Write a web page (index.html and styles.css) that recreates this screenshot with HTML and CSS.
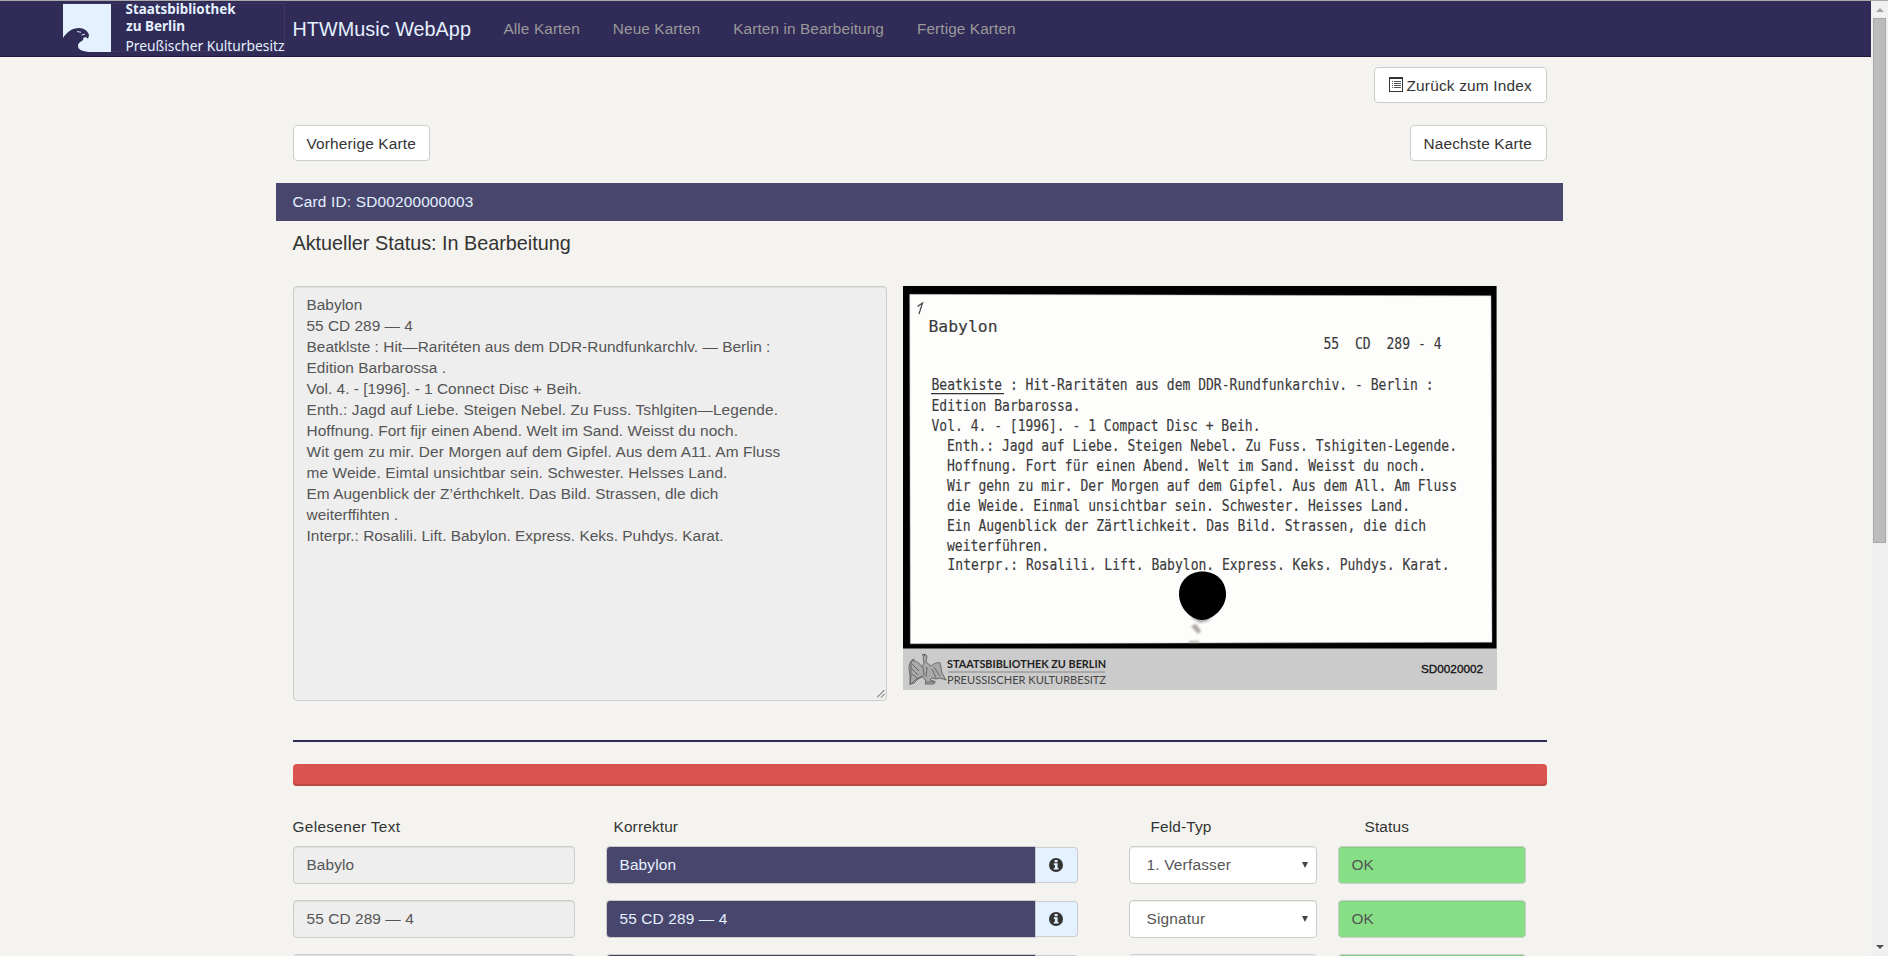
FILE: index.html
```html
<!DOCTYPE html>
<html lang="de">
<head>
<meta charset="utf-8">
<title>HTWMusic WebApp</title>
<link rel="stylesheet" href="styles.css">
</head>
<body>
<div class="page">
  <header class="navbar">
    <svg class="logo" width="222" height="49" viewBox="0 0 222 49">
      <rect x=".5" y=".5" width="221" height="48" fill="none" stroke="#3d3762"/>
      <rect x="0" y="1" width="48" height="48" fill="#e4f1ff"/>
      <path d="M0 35C4 29 9 25 16 25c5 0 9 3 10 7l-1 4c-1-2-3-2-5-1 1 1 0 2-1 3-3 1-4 3-4 5 0 4 5 5 10 6H0z" fill="#312b57"/>
      <path d="M14 28.500l4 .8M18.500 32l3.500-.8" stroke="#e4f1ff" stroke-width=".9" fill="none"/>
      <text class="logo-bold" x="62.500" y="11" textLength="110" lengthAdjust="spacingAndGlyphs">Staatsbibliothek</text>
      <text class="logo-bold" x="63" y="28" textLength="59" lengthAdjust="spacingAndGlyphs">zu Berlin</text>
      <text class="logo-thin" x="62.500" y="47.500" textLength="159" lengthAdjust="spacingAndGlyphs">Preußischer Kulturbesitz</text>
    </svg>
    <a class="brand">HTWMusic WebApp</a>
    <nav class="links"><a>Alle Karten</a><a>Neue Karten</a><a>Karten in Bearbeitung</a><a>Fertige Karten</a></nav>
  </header>
  <main class="container">
    <div class="toolbar end">
      <a class="btn btn-index"><svg width="14" height="15" viewBox="0 0 14 15" shape-rendering="crispEdges"><path d="M.5.5h13v14H.5z" fill="#fff" stroke="#333"/><path d="M0 0h14v2H0z" fill="#333"/><path d="M3 4.500h1M3 6.500h1M3 8.500h1M3 10.500h1M5 4.500h7M5 6.500h7M5 8.500h7M5 10.500h7" stroke="#555"/></svg>Zurück zum Index</a>
    </div>
    <div class="toolbar between"><a class="btn btn-prev">Vorherige Karte</a><a class="btn btn-next">Naechste Karte</a></div>
    <div class="card-bar">Card ID: SD00200000003</div>
    <h4 class="status-title">Aktueller Status: In Bearbeitung</h4>
    <section class="compare">
      <div class="ocr"><div>Babylon</div><div>55 CD 289 — 4</div><div class="w1">Beatklste : Hit—Raritéten aus dem DDR-Rundfunkarchlv. — Berlin :</div><div class="w1">Edition Barbarossa .</div><div>Vol. 4. - [1996]. - 1 Connect Disc + Beih.</div><div class="w3">Enth.: Jagd auf Liebe. Steigen Nebel. Zu Fuss. Tshlgiten—Legende.</div><div class="w2">Hoffnung. Fort fijr einen Abend. Welt im Sand. Weisst du noch.</div><div class="w3">Wit gem zu mir. Der Morgen auf dem Gipfel. Aus dem A11. Am Fluss</div><div class="w3">me Weide. Eimtal unsichtbar sein. Schwester. Helsses Land.</div><div class="w1">Em Augenblick der Z’érthchkelt. Das Bild. Strassen, dle dich</div><div>weiterffihten .</div><div>Interpr.: Rosalili. Lift. Babylon. Express. Keks. Puhdys. Karat.</div><svg class="grip" width="8" height="8" viewBox="0 0 8 8"><path d="M0 7.500L7.500 0M4 7.500L7.500 4" stroke="#555" fill="none"/></svg></div>
      <svg class="scan" width="594" height="404" viewBox="903 286 594 404">
        <defs><filter id="soft" x="-50%" y="-50%" width="200%" height="200%"><feGaussianBlur stdDeviation="1"/></filter></defs>
        <path d="M903 286h594v404H903z" fill="#cbcbcb"/>
        <path d="M903 286h593.500v362.500H903z" fill="#000"/>
        <path d="M909.700 294.300L1491 295.800l1 346.500-581.700 1.500z" fill="#fdfdfc" stroke="#aaa" stroke-width=".5"/>
        <path d="M917.500 306.500l5-3.500-3.500 11" fill="none" stroke="#444" stroke-width="1.200"/>
        <g class="typed">
          <text class="head" x="928.500" y="332" textLength="69" lengthAdjust="spacingAndGlyphs">Babylon</text>
          <text x="1323.500" y="349" textLength="118" lengthAdjust="spacingAndGlyphs" xml:space="preserve">55  CD  289 - 4</text>
          <text x="931.500" y="390" textLength="502" lengthAdjust="spacingAndGlyphs">Beatkiste : Hit-Raritäten aus dem DDR-Rundfunkarchiv. - Berlin :</text>
          <text x="931.500" y="410.500" textLength="149" lengthAdjust="spacingAndGlyphs">Edition Barbarossa.</text>
          <text x="931.500" y="430.500" textLength="329" lengthAdjust="spacingAndGlyphs">Vol. 4. - [1996]. - 1 Compact Disc + Beih.</text>
          <text x="947" y="451" textLength="510" lengthAdjust="spacingAndGlyphs">Enth.: Jagd auf Liebe. Steigen Nebel. Zu Fuss. Tshigiten-Legende.</text>
          <text x="947" y="471" textLength="479" lengthAdjust="spacingAndGlyphs">Hoffnung. Fort für einen Abend. Welt im Sand. Weisst du noch.</text>
          <text x="947" y="491" textLength="510" lengthAdjust="spacingAndGlyphs">Wir gehn zu mir. Der Morgen auf dem Gipfel. Aus dem All. Am Fluss</text>
          <text x="947" y="511" textLength="463" lengthAdjust="spacingAndGlyphs">die Weide. Einmal unsichtbar sein. Schwester. Heisses Land.</text>
          <text x="947" y="531" textLength="479" lengthAdjust="spacingAndGlyphs">Ein Augenblick der Zärtlichkeit. Das Bild. Strassen, die dich</text>
          <text x="947" y="550.500" textLength="102" lengthAdjust="spacingAndGlyphs">weiterführen.</text>
          <text x="947.500" y="570" textLength="502" lengthAdjust="spacingAndGlyphs">Interpr.: Rosalili. Lift. Babylon. Express. Keks. Puhdys. Karat.</text>
        </g>
        <path d="M931 393.700h73" stroke="#333" stroke-width="1.300"/>
        <path d="M1190 617l22 0-4 4-8 2z" fill="#777" filter="url(#soft)" opacity=".6"/>
        <path d="M1191 626l5-2 5 7-3 3zM1189 641h10v2h-10z" fill="#8a847c" filter="url(#soft)" opacity=".7"/>
        <path d="M1202.500 571.500c13 0 23.500 9 23.500 23 0 13-13 25.500-24 25.500s-23-12-23-26c0-13 10-22.500 23.500-22.500z"/>
        <g fill="#aaa" stroke="#555" stroke-width=".8" stroke-linejoin="round">
          <path d="M917 672c-2-1-4-3-4-6l1-7c-3 1-5 5-5 9l1 8v8l4-1 4-4 6-3z"/>
          <path d="M911 661c4-1 9 2 11 6l2-4-1-6 2-2h-3l3-1 2 2-1 6 5 4c4-3 7-4 9-3l2 10 4 7-6-2-4 1-4-1-2 2 4 1v3h-9l1-3-4-5-7 4-5 5 1-9z"/>
          <path d="M912 664l7 7M911 668l7 7M912 674l5 4M934 667l6 9M932 669l4 9M923 667l1 9M927 667l-1 10M926 682h10" fill="none"/>
        </g>
        <text class="sbb sbb-bold" x="947" y="668" textLength="159" lengthAdjust="spacingAndGlyphs">STAATSBIBLIOTHEK ZU BERLIN</text>
        <path d="M948 672h157" stroke="#888" stroke-width="1.200"/>
        <text class="sbb" x="947" y="684" textLength="159" lengthAdjust="spacingAndGlyphs">PREUSSISCHER KULTURBESITZ</text>
        <text class="scan-id" x="1421" y="672.500" textLength="62" lengthAdjust="spacingAndGlyphs">SD0020002</text>
      </svg>
    </section>
    <div class="rule"></div>
    <div class="progress"></div>
    <section class="fields">
      <span class="label">Gelesener Text</span><span class="label l2">Korrektur</span><span class="label l3">Feld-Typ</span><span class="label l4">Status</span>
      <div class="input read">Babylo</div>
      <div class="group"><div class="input fix">Babylon</div><div class="addon"><svg class="info" viewBox="0 0 14 14"><circle cx="7" cy="7" r="7"/><path d="M5.600 2h3v2.200h-3zM4.800 5.300h3.800v4.600h1v1.700H4.700V9.900h1.200V7H4.800z"/></svg></div></div>
      <div class="input select">1. Verfasser<svg class="arrow" viewBox="0 0 6 6"><path d="M0 0h6L3 6z"/></svg></div>
      <div class="input ok">OK</div>
      <div class="input read">55 CD 289 — 4</div>
      <div class="group"><div class="input fix">55 CD 289 — 4</div><div class="addon"><svg class="info" viewBox="0 0 14 14"><circle cx="7" cy="7" r="7"/><path d="M5.600 2h3v2.200h-3zM4.800 5.300h3.800v4.600h1v1.700H4.700V9.900h1.200V7H4.800z"/></svg></div></div>
      <div class="input select">Signatur<svg class="arrow" viewBox="0 0 6 6"><path d="M0 0h6L3 6z"/></svg></div>
      <div class="input ok">OK</div>
      <div class="input read"></div>
      <div class="group"><div class="input fix"></div><div class="addon"></div></div>
      <div class="input select"></div>
      <div class="input ok"></div>
    </section>
  </main>
</div>
<div class="scrollbar">
  <svg class="up" width="8" height="4" viewBox="0 0 8 4"><path d="M0 4l4-4 4 4z" fill="#a3a3a3"/></svg>
  <div class="thumb"></div>
  <svg class="down" width="8" height="4" viewBox="0 0 8 4"><path d="M0 0h8L4 4z" fill="#505050"/></svg>
</div>
</body>
</html>
```

FILE: styles.css
```css
* { box-sizing: border-box; }
body {
  margin: 0;
  height: 956px;
  overflow: hidden;
  display: grid;
  grid-template-columns: 1fr 17px;
  border-top: 1px solid #a9a9a9;
  background: #f4f3ef;
  color: #333;
  font: 15.4px/22px "Liberation Sans", Arial, sans-serif;
}
.page { height: 955px; overflow: hidden; }
.navbar {
  display: flex;
  height: 56px;
  padding-left: 63px;
  background: #312b57;
  border-bottom: 1px solid #22153a;
}
.logo { margin-top: 2px; flex: none; overflow: visible; }
.logo text { fill: #e4f1ff; font-family: "Noto Sans", sans-serif; font-size: 14.5px; }
.logo .logo-bold { font-weight: 700; }
.brand {
  width: 211px;
  padding: 17px 0 0 7.5px;
  color: #e4f1ff;
  font-size: 19.8px;
  letter-spacing: .05px;
  white-space: nowrap;
}
.links { display: flex; gap: 33px; padding: 17px 0 0 7.5px; color: #999; letter-spacing: .09px; white-space: nowrap; }
.container { width: 1287px; margin-left: 276px; padding: 10px 16.5px 0; }
.toolbar { display: flex; height: 36px; margin-bottom: 22px; }
.end { justify-content: flex-end; }
.between { justify-content: space-between; }
.btn {
  display: flex;
  align-items: center;
  gap: 4px;
  height: 36px;
  padding: 1px 13px 0;
  border: 1px solid #ccc;
  border-radius: 4px;
  background: #fff;
  letter-spacing: .17px;
  white-space: nowrap;
}
.btn-index { width: 173px; padding-left: 14px; letter-spacing: .2px; }
.btn-index svg { margin-top: -2px; flex: none; }
.btn-prev, .btn-next { width: 137px; }
.card-bar {
  height: 38px;
  margin: 0 -16.5px;
  padding: 8px 16.5px;
  background: #49466d;
  color: #e4f1ff;
  letter-spacing: .18px;
}
.status-title { margin: 11px 0 32px; font-size: 19.8px; font-weight: 400; line-height: 22px; }
.compare { display: flex; gap: 16px; height: 454px; }
.ocr {
  position: relative;
  width: 594px;
  height: 415px;
  padding: 7px 13px;
  border: 1px solid #ccc;
  border-radius: 4px;
  background: #eee;
  box-shadow: inset 0 1px 1px rgba(0, 0, 0, .075);
  color: #555;
  letter-spacing: .02px;
  line-height: 21px;
  white-space: pre;
}
.w1 { letter-spacing: .05px; }
.w2 { letter-spacing: .09px; }
.w3 { letter-spacing: .125px; }
.grip { position: absolute; right: 1px; bottom: 2px; }
.scan { overflow: visible; }
.typed text {
  font-family: "DejaVu Sans Mono", monospace;
  font-size: 15.2px;
  fill: #3a3a3a;
  stroke: #3a3a3a;
  stroke-width: .15px;
}
.typed .head { font-size: 16px; }
.sbb { font-family: Lato, sans-serif; font-size: 12px; fill: #444; }
.sbb-bold { font-weight: 700; fill: #222; }
.scan-id { font-family: "Liberation Sans", Arial, sans-serif; font-size: 11.5px; fill: #111; stroke: #111; stroke-width: .3px; }
.rule { height: 2px; background: #312b57; }
.progress {
  height: 22px;
  margin: 22px 0 30px;
  border-radius: 4px;
  background: #d9534f;
  box-shadow: inset 0 -2px 0 #ba4845;
}
.fields {
  display: grid;
  grid-template-columns: 282px 492px 188px 188px;
  grid-template-rows: 14px;
  gap: 16px 0;
  column-gap: 0;
  justify-content: start;
}
.fields > :nth-child(4n + 1) { margin-right: 0; }
.fields > :nth-child(4n + 2) { margin-left: 31px; }
.fields > :nth-child(4n + 3) { margin-left: 62px; margin-right: -62px; }
.fields > :nth-child(4n + 4) { margin-left: 83px; margin-right: -83px; }
.label { height: 22px; letter-spacing: .15px; white-space: nowrap; }
.label:first-child { letter-spacing: .33px; }
.l2 { padding-left: 8px; }
.l3 { padding-left: 22px; }
.l4 { padding-left: 27px; }
.input {
  height: 38px;
  padding: 7px 13px;
  border: 1px solid #ccc;
  border-radius: 4px;
  box-shadow: inset 0 1px 1px rgba(0, 0, 0, .075);
  color: #555;
  letter-spacing: .1px;
  white-space: pre;
}
.read { background: #eee; }
.group { display: flex; width: 472px; align-items: center; }
.fix { width: 430px; border-radius: 4px 0 0 4px; background: #49466d; color: #e4f1ff; letter-spacing: .15px; }
.addon {
  display: flex;
  align-items: center;
  justify-content: center;
  width: 42px;
  height: 36px;
  border: 1px solid #ccc;
  border-left: 0;
  border-radius: 0 4px 4px 0;
  background: #e4f1ff;
}
.info { width: 14px; height: 14px; }
.info circle { fill: #333; }
.info path { fill: #e4f1ff; }
.select {
  display: flex;
  align-items: center;
  justify-content: space-between;
  padding: 0 8px 0 17px;
  background: #fff;
  letter-spacing: .2px;
}
.arrow { width: 6px; height: 6px; fill: #444; }
.ok { background: #86df86; }
.scrollbar {
  display: flex;
  flex-direction: column;
  align-items: center;
  height: 955px;
  padding: 7px 0;
  background: #f0f0f0;
}
.up { flex: none; }
.thumb { width: 13px; height: 525px; margin: 6px 0 auto; border: 1px solid #a8a8a8; background: #bcbcbc; }
.down { flex: none; }
```
